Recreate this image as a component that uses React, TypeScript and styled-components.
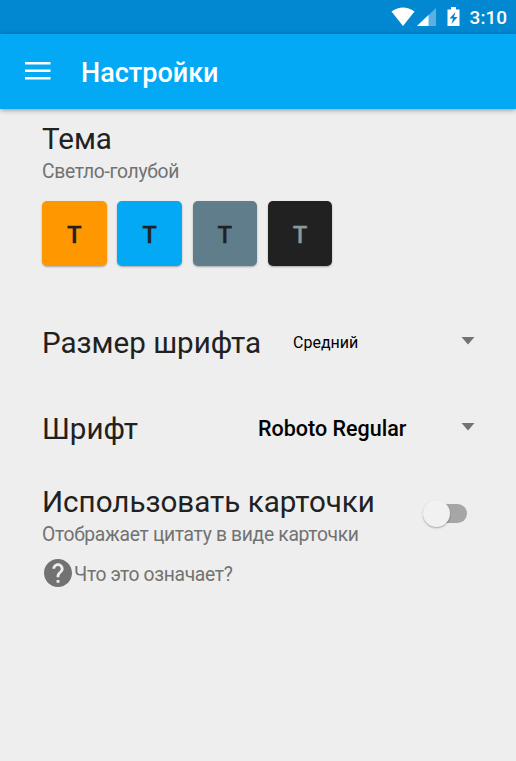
import React from "react";
import styled, { createGlobalStyle } from "styled-components";

const Global = createGlobalStyle`
  * { box-sizing: border-box; }
  body { margin: 0; background: #eee; font-family: Roboto, sans-serif; }
`;
const Screen = styled.div`
  width: 516px; height: 761px; background: #eee; overflow: hidden;
  display: flex; flex-direction: column;
`;
const StatusBar = styled.div`
  height: 34px; flex: none; background: #0288d1; color: #fff;
  display: flex; align-items: center; justify-content: flex-end; padding-right: 9px;
`;
const Clock = styled.span`
  font-size: 19px; font-weight: 500; line-height: 34px; margin: 2px 0 0 8px; white-space: nowrap;
`;
const AppBar = styled.header`
  height: 75px; flex: none; background: #03a9f4; color: #fff;
  display: flex; align-items: center; padding-left: 25px;
  box-shadow: 0 1px 5px rgba(0, 0, 0, 0.4); z-index: 1;
`;
const MenuIcon = styled.svg`
  display: block; margin-bottom: 2px;
`;
const AppTitle = styled.h1`
  margin: 3px 0 0 30px; font-size: 27px; line-height: 30px; font-weight: 500; white-space: nowrap;
`;
const Content = styled.main`
  padding: 13px 41px 0 42px; display: flex; flex-direction: column;
`;
const Heading = styled.div`
  font-size: 29.58px; line-height: 34px; color: #212121; white-space: nowrap;
`;
const Caption = styled.div<{ $top?: number }>`
  font-size: 19.3px; letter-spacing: -0.32px; line-height: 24px; margin-top: ${(p) => p.$top ?? 0}px;
  color: #727272; white-space: nowrap;
`;
const Swatches = styled.div`
  display: flex; gap: 10.8px; margin-top: 16.5px; height: 65px;
`;
const Swatch = styled.button<{ $bg: string; $fg?: string }>`
  width: 64.5px; height: 65px; padding: 3px 0 0; border: 0; border-radius: 5px;
  background: ${(p) => p.$bg}; color: ${(p) => p.$fg ?? "#212121"};
  font: 500 24px/28px Roboto, sans-serif;
  -webkit-text-stroke: 0.3px currentColor;
  box-shadow: 0 1px 2px rgba(0, 0, 0, 0.3);
`;
const Row = styled.div<{ $top: number }>`
  display: flex; align-items: center; justify-content: space-between;
  height: 36px; margin-top: ${(p) => p.$top}px;
`;
const Select = styled.div<{ $width: number; $size: number; $weight: number }>`
  display: flex; align-items: center; justify-content: space-between;
  width: ${(p) => p.$width}px; font-size: ${(p) => p.$size}px; line-height: 24px;
  font-weight: ${(p) => p.$weight}; color: #000; white-space: nowrap;
`;
const Arrow = styled.svg`
  display: block; margin-bottom: 4px;
`;
const CardSetting = styled.div`
  display: flex; align-items: center; justify-content: space-between; margin-top: 38px;
`;
const SwitchTrack = styled.div`
  width: 34px; height: 19px; margin: 0 8px 5px 0; border-radius: 10px; background: #a6a6a6;
  display: flex; align-items: center;
`;
const Thumb = styled.div`
  width: 27px; height: 27px; flex: none; margin-left: -10px; border-radius: 50%;
  background: #f1f1f1; box-shadow: 0 1px 2px rgba(0, 0, 0, 0.3);
`;
const Help = styled.div`
  display: flex; align-items: center; gap: 2px; height: 32px; margin-top: 10px; padding-left: 2px;
`;

const DropArrow = () => (
  <Arrow width="14" height="8" viewBox="0 0 14 8"><path d="M.5 0h13L7 7.5z" fill="#737373" /></Arrow>
);

export default function App() {
  return (
    <Screen>
      <Global />
      <StatusBar>
        <svg width="71" height="20" viewBox="0 0 71 20" fill="#fff">
          <path d="M.5 4.5Q12-3.5 23.5 4.5L12 19z" />
          <path d="M45 1v18H26z" opacity=".35" />
          <path d="M37.5 8.1V19H26z" />
          <path d="M60 0h5v2.5h3.5V19h-12V2.5H60z" />
          <path d="M64.5 5l-6 6.500h3.500L60.500 17l6-7H63z" fill="#0288d1" />
        </svg>
        <Clock>3:10</Clock>
      </StatusBar>
      <AppBar>
        <MenuIcon width="26" height="18" viewBox="0 0 26 18" fill="#fff">
          <path d="M0 0h25.5v2.6H0zM0 7.5h25.5v2.6H0zM0 15h25.5v2.6H0z" />
        </MenuIcon>
        <AppTitle>Настройки</AppTitle>
      </AppBar>
      <Content>
        <Heading>Тема</Heading>
        <Caption $top={4}>Светло-голубой</Caption>
        <Swatches>
          <Swatch $bg="#ff9800">T</Swatch>
          <Swatch $bg="#03a9f4">T</Swatch>
          <Swatch $bg="#607d8b">T</Swatch>
          <Swatch $bg="#212121" $fg="#8a9a9a">T</Swatch>
        </Swatches>
        <Row $top={59.5}>
          <Heading>Размер шрифта</Heading>
          <Select $width={182} $size={16} $weight={400}>Средний<DropArrow /></Select>
        </Row>
        <Row $top={50}>
          <Heading>Шрифт</Heading>
          <Select $width={217} $size={21.5} $weight={500}>Roboto Regular<DropArrow /></Select>
        </Row>
        <CardSetting>
          <div>
            <Heading>Использовать карточки</Heading>
            <Caption $top={4}>Отображает цитату в виде карточки</Caption>
          </div>
          <SwitchTrack><Thumb /></SwitchTrack>
        </CardSetting>
        <Help>
          <svg width="28" height="28" viewBox="2 2 20 20" fill="#727272">
            <path d="M12 2C6.48 2 2 6.48 2 12s4.48 10 10 10 10-4.48 10-10S17.52 2 12 2zm1 17h-2v-2h2v2zm2.07-7.75l-.9.92C13.45 12.9 13 13.5 13 15h-2v-.5c0-1.1.45-2.1 1.17-2.83l1.24-1.26c.37-.36.59-.86.59-1.41 0-1.1-.9-2-2-2s-2 .9-2 2H8c0-2.21 1.79-4 4-4s4 1.79 4 4c0 .88-.36 1.68-.93 2.25z" />
          </svg>
          <Caption $top={3}>Что это означает?</Caption>
        </Help>
      </Content>
    </Screen>
  );
}
